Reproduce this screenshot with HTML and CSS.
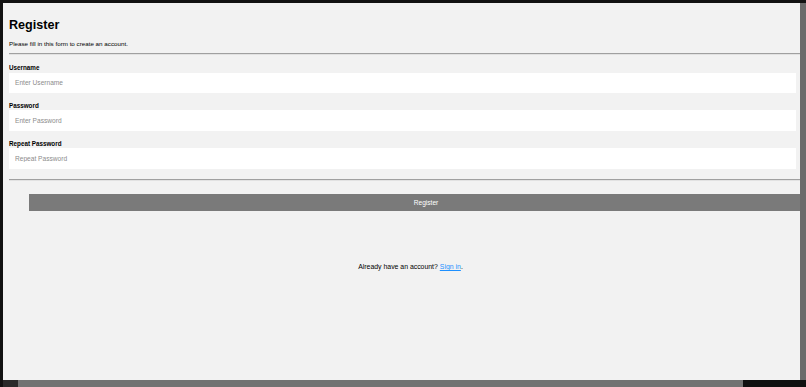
FILE: index.html
```html
<!DOCTYPE html>
<html lang="en">
<head>
    <meta charset="UTF-8">
    <meta name="viewport" content="width=device-width, initial-scale=1.0">
    <title>Register</title>
    <link rel="stylesheet" href="styles.css">
</head>
<body>
    <!-- Browser viewport -->
    <div class="screen">
        <form action="#">
            <div class="container">
                <h1>Register</h1>
                <p>Please fill in this form to create an account.</p>
                <hr>

                <label for="username">Username</label>
                <input type="text" placeholder="Enter Username" name="username" id="username">

                <label for="psw">Password</label>
                <input type="password" placeholder="Enter Password" name="psw" id="psw">

                <label for="psw-repeat">Repeat Password</label>
                <input type="password" placeholder="Repeat Password" name="psw-repeat" id="psw-repeat">
                <hr class="last">

                <button type="submit" class="registerbtn">Register</button>
            </div>

            <div class="signin">
                <p>Already have an account? <a href="#">Sign in</a>.</p>
            </div>
        </form>
    </div>

    <!-- Bottom strip -->
    <div class="taskbar"></div>
</body>
</html>
```

FILE: styles.css
```css
/* General Styling */
* {
    box-sizing: border-box;
}
html, body {
    height: 100%;
}
body {
    margin: 0;
    display: flex;
    flex-direction: column;
    background: #6b6b6b;
    border-top: 3px solid #121212;
    border-left: 3px solid #121212;
    font-family: "Liberation Sans", Arial, sans-serif;
    color: #000;
    overflow: hidden;
}

.screen {
    flex: 1;
    margin-right: 6px;
    background: #f2f2f2;
    overflow: hidden;
}

.taskbar {
    height: 7px;
    background: linear-gradient(to right, #2a2a2a 0 15px, #727272 15px 740px, #101010 740px);
}

/* Form */
.container {
    padding: 6px 0 6px 6px;
}
h1 {
    font-size: 12.6px;
    line-height: 15px;
    margin: 9px 0 0;
}
p {
    font-size: 6.24px;
    line-height: 7.5px;
    margin: 7px 0 0;
}
hr {
    height: 0;
    margin: 5.5px 0 9px;
    border: 0;
    border-top: 1px solid #a0a0a0;
    border-bottom: 1px solid #e2e2e2;
}
hr.last {
    margin-top: 10.5px;
    margin-bottom: 13px;
}

label {
    display: block;
    font-size: 6.3px;
    line-height: 7.5px;
    font-weight: bold;
}
input {
    display: block;
    width: calc(100% - 4px);
    height: 20.5px;
    margin: 1px 0 8.8px;
    padding: 0 6px;
    border: none;
    background: #fff;
    font-family: inherit;
    font-size: 6.6px;
}
input::placeholder {
    color: #8c8c8c;
}

/* Button Styling */
.registerbtn {
    display: block;
    width: calc(100% + 3px);
    height: 17px;
    margin: 4px 0 3px 20px;
    padding: 0;
    border: none;
    background: #7a7a7a;
    color: #fff;
    font-family: inherit;
    font-size: 6.6px;
    cursor: pointer;
}

/* Sign in */
.signin {
    padding-left: 18px;
    text-align: center;
}
.signin p {
    margin: 43px 0 0;
    font-size: 6.9px;
}
.signin a {
    color: #1e90ff;
}
```
